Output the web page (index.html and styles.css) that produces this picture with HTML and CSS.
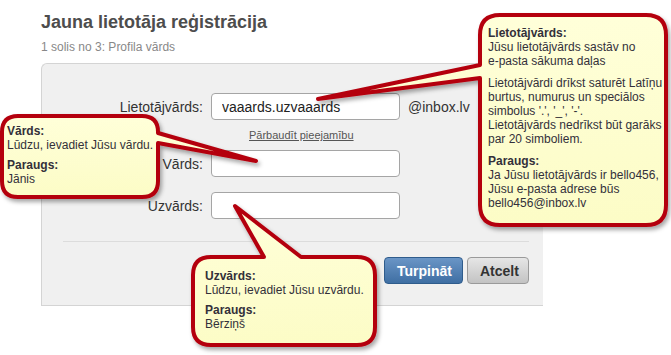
FILE: index.html
```html
<!DOCTYPE html>
<html>
<head>
    <meta charset="UTF-8">
    <title>Jauna lietotāja reģistrācija</title>
    <link rel="stylesheet" href="styles.css">
</head>
<body>
    <div class="lapa">
        <h1>Jauna lietotāja reģistrācija</h1>
        <p class="solis">1 solis no 3: Profila vārds</p>

        <div class="panelis">
            <div class="rinda">
                <label for="lietotajs">Lietotājvārds:</label>
                <input type="text" id="lietotajs" value="vaaards.uzvaaards">
                <span class="domens">@inbox.lv</span>
            </div>
            <div class="saite-rinda">
                <a href="#" class="saite">Pārbaudīt pieejamību</a>
            </div>
            <div class="rinda rinda-vards">
                <label for="vards">Vārds:</label>
                <input type="text" id="vards">
            </div>
            <div class="rinda rinda-uzvards">
                <label for="uzvards">Uzvārds:</label>
                <input type="text" id="uzvards">
            </div>
            <hr class="atdalitajs">
            <div class="pogas">
                <button type="button" class="poga poga-zila">Turpināt</button>
                <button type="button" class="poga poga-peleka">Atcelt</button>
            </div>
        </div>
    </div>

    <!-- Paskaidrojumu burbuļi -->
    <svg class="burbuli" width="671" height="355" viewBox="0 0 671 355">
        <defs>
            <linearGradient id="dzeltens" x1="0" y1="0" x2="0" y2="1">
                <stop offset="0" stop-color="#ffffd9"/>
                <stop offset="1" stop-color="#fcfcc6"/>
            </linearGradient>
            <filter id="ena" x="-10%" y="-10%" width="130%" height="130%">
                <feDropShadow dx="2" dy="3" stdDeviation="2" flood-color="#000" flood-opacity="0.35"/>
            </filter>
        </defs>
        <path class="burbulis" d="M500 15 H646 Q666 15 666 35 V205 Q666 225 646 225 H500 Q480 225 480 205 V78 L318 99 L480 65 V35 Q480 15 500 15 Z"/>
        <path class="burbulis" d="M18 116 H142 Q158 116 158 132 V133 L256 161 L158 143 V181 Q158 197 142 197 H18 Q2 197 2 181 V132 Q2 116 18 116 Z"/>
        <path class="burbulis" d="M211 257 H264 L235 206 L301 257 H357 Q375 257 375 275 V327 Q375 345 357 345 H211 Q193 345 193 327 V275 Q193 257 211 257 Z"/>
    </svg>

    <div class="teksts teksts-lietotajs">
        <b>Lietotājvārds:</b><br>
        Jūsu lietotājvārds sastāv no<br>
        e-pasta sākuma daļas
        <p>Lietotājvārdi drīkst saturēt Latīņu<br>
        burtus, numurus un speciālos<br>
        simbolus '.', '_', '-'.<br>
        Lietotājvārds nedrīkst būt garāks<br>
        par 20 simboliem.</p>
        <p><b>Paraugs:</b><br>
        Ja Jūsu lietotājvārds ir bello456,<br>
        Jūsu e-pasta adrese būs<br>
        bello456@inbox.lv</p>
    </div>

    <div class="teksts teksts-vards">
        <b>Vārds:</b><br>
        Lūdzu, ievadiet Jūsu vārdu.
        <p><b>Paraugs:</b><br>
        Jānis</p>
    </div>

    <div class="teksts teksts-uzvards">
        <b>Uzvārds:</b><br>
        Lūdzu, ievadiet Jūsu uzvārdu.
        <p><b>Paraugs:</b><br>
        Bērziņš</p>
    </div>
</body>
</html>
```

FILE: styles.css
```css
body {
    margin: 0;
    font-family: "Liberation Sans", Arial, sans-serif;
    background-color: #fff;
    color: #333;
}

.lapa {
    padding: 11px 0 0 41px;
}

h1 {
    margin: 0;
    font-size: 18px;
    line-height: 22px;
    color: #4d4d4d;
}

.solis {
    margin: 7px 0 0 0;
    font-size: 12px;
    line-height: 14px;
    color: #888;
}

.panelis {
    width: 502px;
    height: 243px;
    margin-top: 9px;
    padding-top: 29px;
    box-sizing: border-box;
    background-color: #f0f0f0; /*Pelēks*/
    border: 1px solid #d4d4d4;
    border-right: none;
    border-top-left-radius: 6px;
}

.rinda {
    display: flex;
    align-items: center;
}

.rinda label {
    width: 161px;
    margin-right: 8px;
    text-align: right;
    font-size: 14px;
    color: #333;
}

.rinda input {
    width: 189px;
    height: 27px;
    box-sizing: border-box;
    padding: 0 10px;
    border: 1px solid #a5a5a5;
    border-radius: 4px;
    background-color: #fff;
    font-family: inherit;
    font-size: 14px;
    color: #222;
}

.domens {
    margin-left: 8px;
    font-size: 14px;
    color: #333;
}

.saite-rinda {
    padding: 5px 0 0 207px;
    height: 26px;
    box-sizing: border-box;
}

.saite {
    font-size: 11px;
    line-height: 13px;
    color: #555;
}

.rinda-vards {
    margin-top: 4px;
}

.rinda-uzvards {
    margin-top: 15px;
}

.atdalitajs {
    margin: 22px 14px 0 21px;
    border: none;
    border-top: 1px solid #dcdcdc;
}

.pogas {
    display: flex;
    justify-content: flex-end;
    gap: 4px;
    margin: 15px 14px 0 0;
}

.poga {
    height: 27px;
    padding: 0 12px;
    border-radius: 4px;
    font-family: inherit;
    font-size: 14px;
    font-weight: bold;
}

.poga-zila {
    width: 79px;
    background: linear-gradient(#6a95c6, #3f6fa3);
    border: 1px solid #2f5c8c;
    color: #fff;
}

.poga-peleka {
    width: 62px;
    background: linear-gradient(#e6e6e6, #c3c3c3);
    border: 1px solid #9a9a9a;
    color: #333;
}

.burbuli {
    position: absolute;
    top: 0;
    left: 0;
    pointer-events: none;
}

.burbulis {
    fill: url(#dzeltens);
    stroke: #b4000f; /*Sarkans*/
    stroke-width: 4;
    stroke-linejoin: round;
    filter: url(#ena);
}

.teksts {
    position: absolute;
    font-size: 12px;
    line-height: 14px;
    color: #33303a;
}

.teksts p {
    margin: 8px 0 0 0;
}

.teksts-lietotajs {
    left: 488px;
    top: 26px;
}

.teksts-vards {
    left: 7px;
    top: 124px;
}

.teksts-vards p,
.teksts-uzvards p {
    margin-top: 6px;
}

.teksts-uzvards {
    left: 205px;
    top: 269px;
}
```
